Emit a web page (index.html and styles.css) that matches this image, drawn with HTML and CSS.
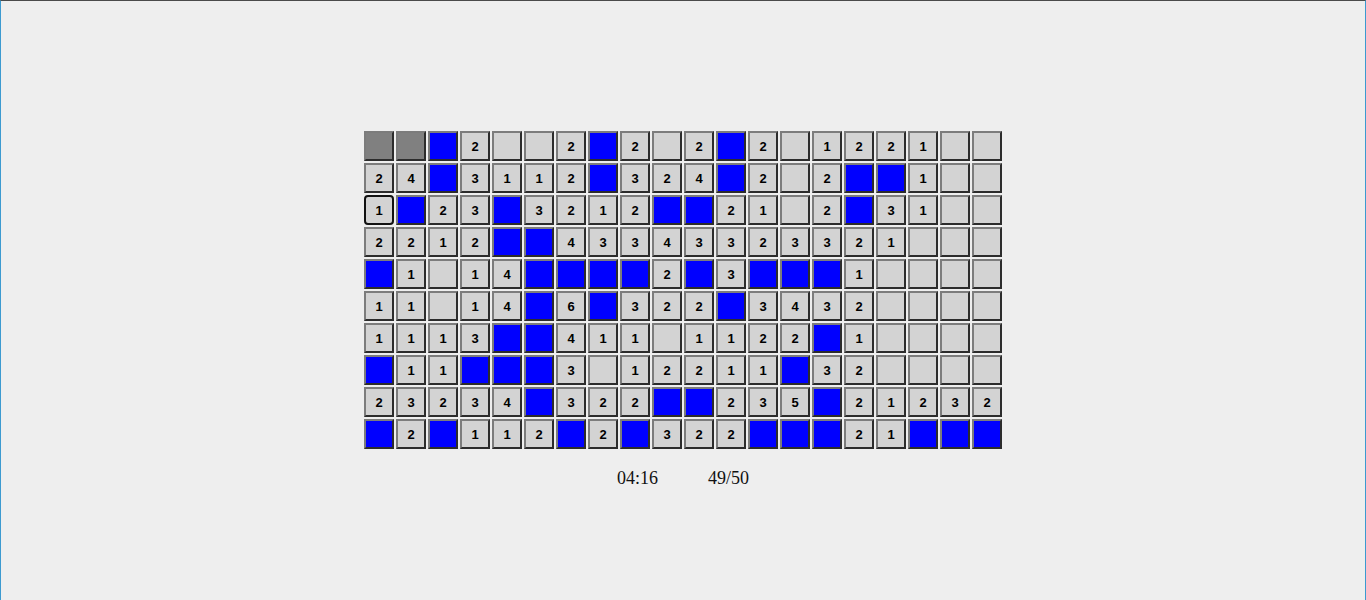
FILE: index.html
```html
<!DOCTYPE html>
<html>
<head>
<meta charset="utf-8">
<link rel="stylesheet" href="styles.css">
</head>
<body>
<div class="frame">
  <div class="board">
    <div class="c g"></div><div class="c g"></div><div class="c b"></div><div class="c">2</div><div class="c"></div><div class="c"></div><div class="c">2</div><div class="c b"></div><div class="c">2</div><div class="c"></div><div class="c">2</div><div class="c b"></div><div class="c">2</div><div class="c"></div><div class="c">1</div><div class="c">2</div><div class="c">2</div><div class="c">1</div><div class="c"></div><div class="c"></div>
    <div class="c">2</div><div class="c">4</div><div class="c b"></div><div class="c">3</div><div class="c">1</div><div class="c">1</div><div class="c">2</div><div class="c b"></div><div class="c">3</div><div class="c">2</div><div class="c">4</div><div class="c b"></div><div class="c">2</div><div class="c"></div><div class="c">2</div><div class="c b"></div><div class="c b"></div><div class="c">1</div><div class="c"></div><div class="c"></div>
    <div class="c f">1</div><div class="c b"></div><div class="c">2</div><div class="c">3</div><div class="c b"></div><div class="c">3</div><div class="c">2</div><div class="c">1</div><div class="c">2</div><div class="c b"></div><div class="c b"></div><div class="c">2</div><div class="c">1</div><div class="c"></div><div class="c">2</div><div class="c b"></div><div class="c">3</div><div class="c">1</div><div class="c"></div><div class="c"></div>
    <div class="c">2</div><div class="c">2</div><div class="c">1</div><div class="c">2</div><div class="c b"></div><div class="c b"></div><div class="c">4</div><div class="c">3</div><div class="c">3</div><div class="c">4</div><div class="c">3</div><div class="c">3</div><div class="c">2</div><div class="c">3</div><div class="c">3</div><div class="c">2</div><div class="c">1</div><div class="c"></div><div class="c"></div><div class="c"></div>
    <div class="c b"></div><div class="c">1</div><div class="c"></div><div class="c">1</div><div class="c">4</div><div class="c b"></div><div class="c b"></div><div class="c b"></div><div class="c b"></div><div class="c">2</div><div class="c b"></div><div class="c">3</div><div class="c b"></div><div class="c b"></div><div class="c b"></div><div class="c">1</div><div class="c"></div><div class="c"></div><div class="c"></div><div class="c"></div>
    <div class="c">1</div><div class="c">1</div><div class="c"></div><div class="c">1</div><div class="c">4</div><div class="c b"></div><div class="c">6</div><div class="c b"></div><div class="c">3</div><div class="c">2</div><div class="c">2</div><div class="c b"></div><div class="c">3</div><div class="c">4</div><div class="c">3</div><div class="c">2</div><div class="c"></div><div class="c"></div><div class="c"></div><div class="c"></div>
    <div class="c">1</div><div class="c">1</div><div class="c">1</div><div class="c">3</div><div class="c b"></div><div class="c b"></div><div class="c">4</div><div class="c">1</div><div class="c">1</div><div class="c"></div><div class="c">1</div><div class="c">1</div><div class="c">2</div><div class="c">2</div><div class="c b"></div><div class="c">1</div><div class="c"></div><div class="c"></div><div class="c"></div><div class="c"></div>
    <div class="c b"></div><div class="c">1</div><div class="c">1</div><div class="c b"></div><div class="c b"></div><div class="c b"></div><div class="c">3</div><div class="c"></div><div class="c">1</div><div class="c">2</div><div class="c">2</div><div class="c">1</div><div class="c">1</div><div class="c b"></div><div class="c">3</div><div class="c">2</div><div class="c"></div><div class="c"></div><div class="c"></div><div class="c"></div>
    <div class="c">2</div><div class="c">3</div><div class="c">2</div><div class="c">3</div><div class="c">4</div><div class="c b"></div><div class="c">3</div><div class="c">2</div><div class="c">2</div><div class="c b"></div><div class="c b"></div><div class="c">2</div><div class="c">3</div><div class="c">5</div><div class="c b"></div><div class="c">2</div><div class="c">1</div><div class="c">2</div><div class="c">3</div><div class="c">2</div>
    <div class="c b"></div><div class="c">2</div><div class="c b"></div><div class="c">1</div><div class="c">1</div><div class="c">2</div><div class="c b"></div><div class="c">2</div><div class="c b"></div><div class="c">3</div><div class="c">2</div><div class="c">2</div><div class="c b"></div><div class="c b"></div><div class="c b"></div><div class="c">2</div><div class="c">1</div><div class="c b"></div><div class="c b"></div><div class="c b"></div>
  </div>
  <div class="status">
    <span class="timer">04:16</span>
    <span class="count">49/50</span>
  </div>
</div>
</body>
</html>
```

FILE: styles.css
```css
html, body {
  margin: 0;
  padding: 0;
  background: #eeeeee;
}
.frame {
  box-sizing: border-box;
  width: 1366px;
  height: 600px;
  border-top: 1px solid #4a4a4a;
  border-left: 1px solid #3c9ad0;
  border-right: 1px solid #3c9ad0;
  padding-top: 130px;
  display: flex;
  flex-direction: column;
  align-items: center;
  font-family: "Liberation Serif", serif;
}
.board {
  display: grid;
  grid-template-columns: repeat(20, 30px);
  grid-auto-rows: 30px;
  gap: 2px;
}
.c {
  box-sizing: border-box;
  width: 30px;
  height: 30px;
  background: #d3d3d3;
  border: 2px solid;
  border-color: #7c7c7c #2c2c2c #2c2c2c #7c7c7c;
  display: flex;
  align-items: center;
  justify-content: center;
  font-family: "Liberation Sans", Arial, sans-serif;
  font-weight: bold;
  font-size: 13px;
  color: #000;
}
.c.b {
  background: #0000ff;
}
.c.g {
  background: #808080;
}
.c.f {
  border-color: #111;
  border-radius: 4px;
}
.status {
  display: flex;
  gap: 50px;
  margin-top: 19px;
  font-size: 18px;
  color: #111;
  line-height: 20px;
}
```
